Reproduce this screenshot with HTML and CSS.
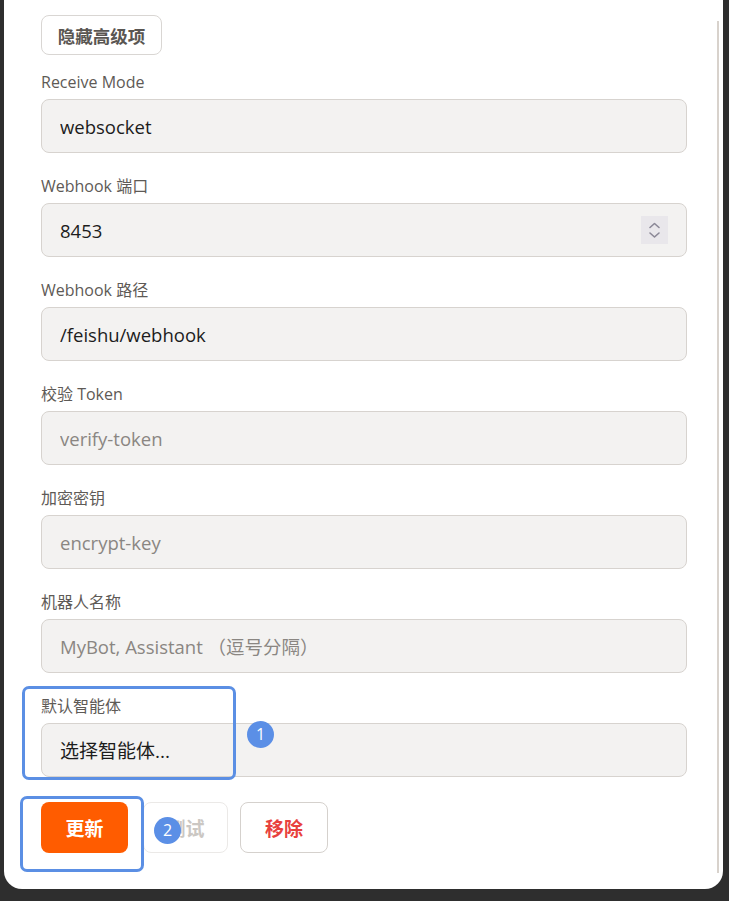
FILE: index.html
```html
<!DOCTYPE html>
<html lang="zh-CN">
<head>
<meta charset="utf-8">
<title>Feishu Channel</title>
<link rel="stylesheet" href="styles.css">
</head>
<body>
<div class="panel">
  <div class="content">
    <button class="toggle-btn" type="button">隐藏高级项</button>

    <div class="field">
      <label class="label">Receive Mode</label>
      <input class="input" type="text" value="websocket">
    </div>

    <div class="field">
      <label class="label">Webhook 端口</label>
      <div class="input number-box">
        <input class="bare" type="text" value="8453">
        <span class="spinner">
          <svg width="27" height="28" viewBox="0 0 27 28">
            <path d="M9 11.5 L13.5 7.5 L18 11.5" fill="none" stroke="#8b8897" stroke-width="1.6" stroke-linecap="round" stroke-linejoin="round"/>
            <path d="M9 17 L13.5 21 L18 17" fill="none" stroke="#8b8897" stroke-width="1.6" stroke-linecap="round" stroke-linejoin="round"/>
          </svg>
        </span>
      </div>
    </div>

    <div class="field">
      <label class="label">Webhook 路径</label>
      <input class="input" type="text" value="/feishu/webhook">
    </div>

    <div class="field">
      <label class="label">校验 Token</label>
      <input class="input" type="text" placeholder="verify-token">
    </div>

    <div class="field">
      <label class="label">加密密钥</label>
      <input class="input" type="text" placeholder="encrypt-key">
    </div>

    <div class="field">
      <label class="label">机器人名称</label>
      <input class="input" type="text" placeholder="MyBot, Assistant （逗号分隔）">
    </div>

    <div class="field">
      <label class="label">默认智能体</label>
      <div class="input select">选择智能体...</div>
    </div>

    <div class="actions">
      <button class="btn btn-primary" type="button">更新</button>
      <button class="btn btn-disabled" type="button">测试</button>
      <button class="btn btn-danger" type="button">移除</button>
    </div>
  </div>
  <div class="scrollbar"></div>

  <div class="mark mark-box mark-box-1"></div>
  <div class="mark mark-dot mark-dot-1">1</div>
  <div class="mark mark-box mark-box-2"></div>
  <div class="mark mark-dot mark-dot-2">2</div>
</div>
</body>
</html>
```

FILE: styles.css
```css
* { box-sizing: border-box; }

html, body {
  margin: 0;
  padding: 0;
  background: #2e2e2e;
  height: 100%;
}

body {
  font-family: "Open Sans", "Noto Sans CJK SC", sans-serif;
  padding-left: 4px;
  width: 729px;
}

.panel {
  position: relative;
  width: 719px;
  background: #ffffff;
  border-radius: 0 0 18px 18px;
  display: flex;
  padding-left: 37px;
}

.content {
  width: 646px;
  padding-top: 15px;
  padding-bottom: 36px;
  display: flex;
  flex-direction: column;
}

.scrollbar {
  width: 2px;
  margin-left: 30px;
  margin-top: 21px;
  margin-bottom: 16px;
  background: #d8d2cc;
}

.toggle-btn {
  align-self: flex-start;
  width: 121px;
  height: 40px;
  padding: 0;
  border: 1px solid #d9d6d3;
  border-radius: 8px;
  background: #fff;
  font-family: "Open Sans", "Noto Sans CJK SC", sans-serif;
  font-size: 17.5px;
  font-weight: 700;
  color: #5a5652;
  margin-bottom: 17px;
}

.field {
  display: flex;
  flex-direction: column;
  margin-bottom: 23px;
}

.label {
  font-size: 16px;
  line-height: 19px;
  color: #5e5a56;
  margin-bottom: 7px;
  margin-top: 1px;
}

.input {
  height: 54px;
  width: 100%;
  border: 1px solid #d7d3cf;
  border-radius: 8px;
  background: #f3f2f1;
  padding: 0 18px;
  font-family: "Open Sans", "Noto Sans CJK SC", sans-serif;
  font-size: 18.5px;
  color: #1c1c1c;
  outline: none;
}

.input::placeholder { color: #8a8682; }

.number-box {
  display: flex;
  align-items: center;
  padding-right: 18px;
}

.bare {
  flex: 1;
  border: none;
  background: transparent;
  font: inherit;
  color: inherit;
  padding: 0;
  outline: none;
}

.spinner {
  width: 27px;
  height: 28px;
  background: #e9e7eb;
  display: flex;
}

.select {
  display: flex;
  align-items: center;
  font-size: 19px;
}

.actions {
  display: flex;
  margin-top: 2px;
  gap: 12px;
}

.btn {
  height: 51px;
  border-radius: 8px;
  font-family: "Open Sans", "Noto Sans CJK SC", sans-serif;
  font-size: 19px;
  font-weight: 700;
  padding: 0;
}

.btn-primary {
  width: 87px;
  background: #ff5c00;
  border: none;
  color: #fff;
}

.btn-disabled {
  width: 85px;
  margin-left: 3px;
  background: #fff;
  border: 1px solid #ebe9e7;
  color: #cbc7c3;
}

.btn-danger {
  width: 88px;
  background: #fff;
  border: 1px solid #d5d1cd;
  color: #e8413e;
}

.mark { position: absolute; }

.mark-box {
  border: 3px solid #5b8fe4;
  border-radius: 7px;
}

.mark-box-1 {
  left: 18px;
  top: 686px;
  width: 214px;
  height: 94px;
}

.mark-box-2 {
  left: 16px;
  top: 796px;
  width: 124px;
  height: 76px;
}

.mark-dot {
  width: 27px;
  height: 27px;
  border-radius: 50%;
  background: #5b8fe6;
  color: #fff;
  font-size: 16px;
  line-height: 27px;
  text-align: center;
}

.mark-dot-1 { left: 243px; top: 721px; }
.mark-dot-2 { left: 150px; top: 817px; }
```
